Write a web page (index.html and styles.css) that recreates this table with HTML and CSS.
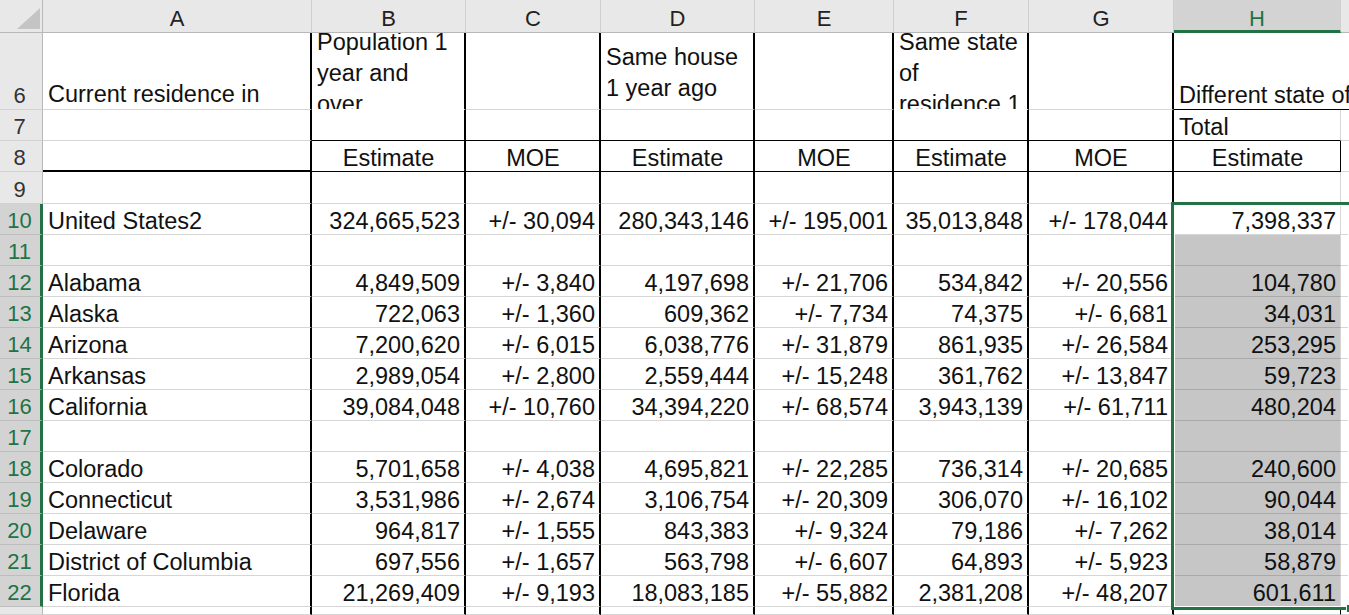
FILE: index.html
```html
<!DOCTYPE html>
<html lang="en">
<head>
<meta charset="utf-8">
<title>Sheet</title>
<link rel="stylesheet" href="styles.css">
</head>
<body>
<div class="sheet">
  <div class="corner"><svg width="43" height="33" viewBox="0 0 43 33"><polygon points="17,29 40,29 40,8" fill="#c4c4c4"/></svg></div>
  <div class="ch">A</div><div class="ch">B</div><div class="ch">C</div><div class="ch">D</div><div class="ch">E</div><div class="ch">F</div><div class="ch">G</div><div class="ch sel">H</div><div class="ch last"></div>

  <div class="rh">6</div>
  <div class="c vb pb2">Current residence in</div>
  <div class="c vb nb wrap up"><span>Population 1 year and over</span></div>
  <div class="c vb"></div>
  <div class="c vb wrap mid"><span>Same house 1 year ago</span></div>
  <div class="c vb"></div>
  <div class="c vb nb wrap up fw"><span>Same state of residence 1 year ago</span></div>
  <div class="c vb"></div>
  <div class="c hb span2 pb1">Different state of residence 1 year ago</div>

  <div class="rh">7</div>
  <div class="c vb"></div>
  <div class="c vb hb"></div><div class="c vb hb"></div><div class="c vb hb"></div><div class="c vb hb"></div><div class="c vb hb"></div><div class="c vb hb"></div>
  <div class="c hb">Total</div>
  <div class="c"></div>

  <div class="rh">8</div>
  <div class="c vb hb2"></div>
  <div class="c vb hb ctr">Estimate</div>
  <div class="c vb hb ctr">MOE</div>
  <div class="c vb hb ctr">Estimate</div>
  <div class="c vb hb ctr">MOE</div>
  <div class="c vb hb ctr">Estimate</div>
  <div class="c vb hb ctr">MOE</div>
  <div class="c hb ctr rbk">Estimate</div>
  <div class="c"></div>

  <div class="rh">9</div>
  <div class="c vb"></div><div class="c vb"></div><div class="c vb"></div><div class="c vb"></div><div class="c vb"></div><div class="c vb"></div><div class="c vb"></div>
  <div class="c"></div><div class="c"></div>

  <div class="rh sel">10</div>
  <div class="c vb">United States2</div>
  <div class="c vb num">324,665,523</div><div class="c vb num">+/- 30,094</div><div class="c vb num">280,343,146</div><div class="c vb num">+/- 195,001</div><div class="c vb num">35,013,848</div><div class="c vb num">+/- 178,044</div>
  <div class="c num">7,398,337</div><div class="c"></div>

  <div class="rh sel">11</div>
  <div class="c vb"></div><div class="c vb"></div><div class="c vb"></div><div class="c vb"></div><div class="c vb"></div><div class="c vb"></div><div class="c vb"></div>
  <div class="c sf"></div><div class="c"></div>

  <div class="rh sel">12</div>
  <div class="c vb">Alabama</div>
  <div class="c vb num">4,849,509</div><div class="c vb num">+/- 3,840</div><div class="c vb num">4,197,698</div><div class="c vb num">+/- 21,706</div><div class="c vb num">534,842</div><div class="c vb num">+/- 20,556</div>
  <div class="c num sf">104,780</div><div class="c"></div>

  <div class="rh sel">13</div>
  <div class="c vb">Alaska</div>
  <div class="c vb num">722,063</div><div class="c vb num">+/- 1,360</div><div class="c vb num">609,362</div><div class="c vb num">+/- 7,734</div><div class="c vb num">74,375</div><div class="c vb num">+/- 6,681</div>
  <div class="c num sf">34,031</div><div class="c"></div>

  <div class="rh sel">14</div>
  <div class="c vb">Arizona</div>
  <div class="c vb num">7,200,620</div><div class="c vb num">+/- 6,015</div><div class="c vb num">6,038,776</div><div class="c vb num">+/- 31,879</div><div class="c vb num">861,935</div><div class="c vb num">+/- 26,584</div>
  <div class="c num sf">253,295</div><div class="c"></div>

  <div class="rh sel">15</div>
  <div class="c vb">Arkansas</div>
  <div class="c vb num">2,989,054</div><div class="c vb num">+/- 2,800</div><div class="c vb num">2,559,444</div><div class="c vb num">+/- 15,248</div><div class="c vb num">361,762</div><div class="c vb num">+/- 13,847</div>
  <div class="c num sf">59,723</div><div class="c"></div>

  <div class="rh sel">16</div>
  <div class="c vb">California</div>
  <div class="c vb num">39,084,048</div><div class="c vb num">+/- 10,760</div><div class="c vb num">34,394,220</div><div class="c vb num">+/- 68,574</div><div class="c vb num">3,943,139</div><div class="c vb num">+/- 61,711</div>
  <div class="c num sf">480,204</div><div class="c"></div>

  <div class="rh sel">17</div>
  <div class="c vb"></div><div class="c vb"></div><div class="c vb"></div><div class="c vb"></div><div class="c vb"></div><div class="c vb"></div><div class="c vb"></div>
  <div class="c sf"></div><div class="c"></div>

  <div class="rh sel">18</div>
  <div class="c vb">Colorado</div>
  <div class="c vb num">5,701,658</div><div class="c vb num">+/- 4,038</div><div class="c vb num">4,695,821</div><div class="c vb num">+/- 22,285</div><div class="c vb num">736,314</div><div class="c vb num">+/- 20,685</div>
  <div class="c num sf">240,600</div><div class="c"></div>

  <div class="rh sel">19</div>
  <div class="c vb">Connecticut</div>
  <div class="c vb num">3,531,986</div><div class="c vb num">+/- 2,674</div><div class="c vb num">3,106,754</div><div class="c vb num">+/- 20,309</div><div class="c vb num">306,070</div><div class="c vb num">+/- 16,102</div>
  <div class="c num sf">90,044</div><div class="c"></div>

  <div class="rh sel">20</div>
  <div class="c vb">Delaware</div>
  <div class="c vb num">964,817</div><div class="c vb num">+/- 1,555</div><div class="c vb num">843,383</div><div class="c vb num">+/- 9,324</div><div class="c vb num">79,186</div><div class="c vb num">+/- 7,262</div>
  <div class="c num sf">38,014</div><div class="c"></div>

  <div class="rh sel">21</div>
  <div class="c vb">District of Columbia</div>
  <div class="c vb num">697,556</div><div class="c vb num">+/- 1,657</div><div class="c vb num">563,798</div><div class="c vb num">+/- 6,607</div><div class="c vb num">64,893</div><div class="c vb num">+/- 5,923</div>
  <div class="c num sf">58,879</div><div class="c"></div>

  <div class="rh sel">22</div>
  <div class="c vb">Florida</div>
  <div class="c vb num">21,269,409</div><div class="c vb num">+/- 9,193</div><div class="c vb num">18,083,185</div><div class="c vb num">+/- 55,882</div><div class="c vb num">2,381,208</div><div class="c vb num">+/- 48,207</div>
  <div class="c num sf">601,611</div><div class="c"></div>

  <div class="rh"></div>
  <div class="c vb"></div><div class="c vb"></div><div class="c vb"></div><div class="c vb"></div><div class="c vb"></div><div class="c vb"></div><div class="c vb"></div>
  <div class="c rbk"></div><div class="c"></div>

  <div class="selbox"><div class="handle"></div></div>
</div>
</body>
</html>
```

FILE: styles.css
```css
* { box-sizing: border-box; }
html, body {
  margin: 0;
  padding: 0;
  width: 1349px;
  height: 615px;
  overflow: hidden;
  background: #ffffff;
}
.sheet {
  position: relative;
  display: grid;
  grid-template-columns: 43px 269px 154px 135px 154px 139px 135px 145px 167px 1fr;
  grid-template-rows: 33px 77px 31px 31px 32px repeat(13, 31px) 1fr;
  width: 1349px;
  height: 615px;
  font-family: "Liberation Sans", Arial, sans-serif;
  color: #111111;
}
.corner {
  background: #e8e8e8;
  border-right: 1px solid #b8b8b8;
  border-bottom: 1px solid #b8b8b8;
}
.corner svg { display: block; }
.ch {
  background: #e8e8e8;
  border-right: 1px solid #cfcfcf;
  border-bottom: 1px solid #b8b8b8;
  display: flex;
  align-items: flex-end;
  justify-content: center;
  font-size: 22px;
  line-height: 26px;
  color: #222222;
}
.ch.sel {
  background: #d3d3d3;
  color: #217346;
  border-bottom: 3px solid #217346;
  line-height: 22px;
}
.ch.last { border-right: none; }
.rh {
  background: #e8e8e8;
  border-right: 1px solid #b8b8b8;
  border-bottom: 1px solid #d2d2d2;
  display: flex;
  align-items: flex-end;
  justify-content: center;
  padding-right: 3px;
  font-size: 22px;
  line-height: 26px;
  color: #333333;
  overflow: hidden;
}
.rh.sel {
  background: #d3d3d3;
  color: #217346;
  border-right: 3px solid #217346;
  border-bottom-color: #bdbdbd;
  padding-right: 1px;
}
.c {
  border-right: 1px solid #d6d6d6;
  border-bottom: 1px solid #d6d6d6;
  display: flex;
  align-items: flex-end;
  padding: 0 4px 0 5px;
  font-size: 23.5px;
  line-height: 26px;
  white-space: nowrap;
  overflow: hidden;
  min-width: 0;
  background: #ffffff;
}
.vb { border-right: 2px solid #000000; }
.hb { border-bottom-color: #000000; }
.hb2 { border-bottom: 2px solid #000000; }
.nb { border-bottom-color: #ffffff; }
.rbk { border-right-color: #000000; }
.num { justify-content: flex-end; }
.ctr { justify-content: center; }
.pb1 { padding-bottom: 1px; }
.pb2 { padding-bottom: 2px; }
.wrap {
  white-space: normal;
  line-height: 31px;
  align-items: flex-start;
  padding-right: 8px;
}
.wrap.up span { margin-top: -6px; }
.wrap.mid { padding-top: 9px; }
.wrap.fw { padding-right: 2px; }
.span2 { grid-column: span 2; }
.sf {
  background: #c6c6c6;
  border-bottom-color: #a9a9a9;
}
.selbox {
  position: absolute;
  grid-column: 9;
  grid-row: 6 / 19;
  top: -2px;
  left: -3px;
  right: -3px;
  bottom: -3px;
  border: 3px solid #217346;
  box-shadow: inset 0 0 0 1px #ffffff;
  z-index: 2;
  pointer-events: none;
}
.handle {
  position: absolute;
  right: -6px;
  bottom: -6px;
  width: 9px;
  height: 9px;
  background: #217346;
  border: 1px solid #ffffff;
}
```
